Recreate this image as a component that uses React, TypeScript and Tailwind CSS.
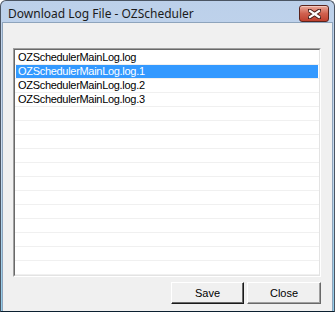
import React from "react";

const files = [
  "OZSchedulerMainLog.log",
  "OZSchedulerMainLog.log.1",
  "OZSchedulerMainLog.log.2",
  "OZSchedulerMainLog.log.3",
];

function CloseGlyph() {
  return (
    <svg width="13" height="10" viewBox="0 0 13 10">
      <path
        d="M1.5 1.5 L11.5 8.5 M11.5 1.5 L1.5 8.5"
        stroke="#4a1e18"
        strokeWidth="4"
        strokeLinecap="square"
      />
      <path
        d="M2 2 L11 8 M11 2 L2 8"
        stroke="#ffffff"
        strokeWidth="2.2"
        strokeLinecap="square"
      />
    </svg>
  );
}

function DialogButton({ label, primary }: { label: string; primary?: boolean }) {
  return (
    <button
      className={
        "h-[22px] bg-[#f0f0f0] text-[11px] text-black border " +
        (primary
          ? "w-[73px] border-t-[#ffffff] border-l-[#ffffff] border-r-[#1a1a1a] border-b-[#1a1a1a] shadow-[inset_-1px_-1px_0_#696969]"
          : "w-[74px] border-t-[#ffffff] border-l-[#ffffff] border-r-[#696969] border-b-[#696969] shadow-[inset_-1px_-1px_0_#a0a0a0]")
      }
      style={{ fontFamily: "'Liberation Sans', Arial, sans-serif" }}
    >
      {label}
    </button>
  );
}

export default function App() {
  const rows = Array.from({ length: 16 }, (_, i) => files[i] ?? "");

  return (
    <div
      className="w-[335px] h-[312px] flex flex-col rounded-t-[6px] border border-[#4b5563] border-b-[#0b2030] bg-gradient-to-b from-[#bcd0ea] via-[#c9dbef] to-[#8fcbe8] overflow-hidden"
      style={{ fontFamily: "'Noto Sans', 'Liberation Sans', sans-serif" }}
    >
      {/* title bar */}
      <div className="h-[24px] flex items-start justify-between pl-[7px] pr-[5px]">
        <span className="mt-[7px] text-[12px] text-[#1b1b1b] leading-none">Download Log File - OZScheduler</span>
        <div className="mt-[4px] w-[30px] h-[17px] rounded-[3px] border border-[#5a231c] bg-gradient-to-b from-[#e9a99b] via-[#d0614f] to-[#c0402e] flex items-center justify-center shadow-[inset_0_1px_0_#f4c9bf]">
          <CloseGlyph />
        </div>
      </div>

      {/* client area */}
      <div className="flex-1 mx-[1px] mb-[2px] border border-[#8ea4bc] bg-[#f0f0f0] flex flex-col pt-[25px] pl-[10px] pr-[11px] pb-[11px]">
        <div className="flex-1 border-t border-l border-t-[#a0a0a0] border-l-[#a0a0a0] border-b border-r border-b-[#ffffff] border-r-[#ffffff]">
          <div
            className="h-full border border-t-[#696969] border-l-[#696969] border-b-[#e3e3e3] border-r-[#e3e3e3] bg-white pt-[1px] overflow-hidden"
            style={{ fontFamily: "'Liberation Sans', Arial, sans-serif" }}
          >
            {rows.map((name, i) => (
              <div key={i} className="h-[14px] border-b border-[#f0f0f0] pl-[1px] pr-[1px]">
                <div
                  className={
                    "h-[13px] pl-[2px] text-[11px] leading-[13px] tracking-[-0.3px] " +
                    (i === 1 ? "bg-[#3399ff] text-white" : "text-black")
                  }
                >
                  {name}
                </div>
              </div>
            ))}
          </div>
        </div>
        <div className="flex justify-end gap-[3px] mt-[5px]">
          <DialogButton label="Save" primary />
          <DialogButton label="Close" />
        </div>
      </div>
    </div>
  );
}
